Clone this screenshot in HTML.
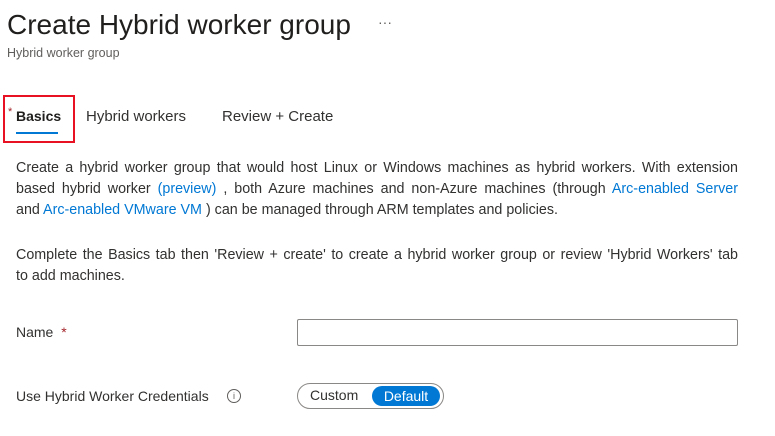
<!DOCTYPE html>
<html><head><style>
body{margin:0;width:775px;height:436px;background:#fff;font-family:"Liberation Sans",sans-serif;color:#323130;position:relative;overflow:hidden}
.a{position:absolute;white-space:nowrap}
a{color:#0078d4;text-decoration:none}
.l{position:absolute;left:16px;width:722px;font-size:14.3px;line-height:21px;text-align:justify;text-align-last:justify;white-space:nowrap;color:#323130}
.e{text-align-last:left}
</style></head><body>
<div class="a" style="left:7px;top:9px;font-size:28px;color:#201f1e">Create Hybrid worker group</div>
<div class="a" style="left:378px;top:14px;font-size:14px;color:#605e5c">···</div>
<div class="a" style="left:7px;top:46px;font-size:12.5px;color:#605e5c">Hybrid worker group</div>
<div class="a" style="left:3px;top:95px;width:68px;height:44px;border:2px solid #e81123"></div>
<div class="a" style="left:8px;top:106px;font-size:11px;color:#a4262c">*</div>
<div class="a" style="left:16px;top:108px;font-size:14px;font-weight:bold;color:#201f1e">Basics</div>
<div class="a" style="left:16px;top:132px;width:42px;height:2px;background:#0078d4"></div>
<div class="a" style="left:86px;top:108px;font-size:15px">Hybrid workers</div>
<div class="a" style="left:222px;top:108px;font-size:15px">Review + Create</div>
<div class="l" style="top:158px">Create a hybrid worker group that would host Linux or Windows machines as hybrid workers. With extension</div>
<div class="l" style="top:179px">based hybrid worker <a>(preview)</a> , both Azure machines and non-Azure machines (through <a>Arc-enabled Server</a></div>
<div class="l e" style="top:200px">and <a>Arc-enabled VMware VM</a> ) can be managed through ARM templates and policies.</div>
<div class="l" style="top:245px">Complete the Basics tab then 'Review + create' to create a hybrid worker group or review 'Hybrid Workers' tab</div>
<div class="l e" style="top:266px">to add machines.</div>
<div class="a" style="left:16px;top:324px;font-size:14px">Name <span style="color:#a4262c;margin-left:4px">*</span></div>
<div class="a" style="left:297px;top:319px;width:439px;height:25px;border:1px solid #8a8886;border-radius:2px"></div>
<div class="a" style="left:16px;top:388px;font-size:14px">Use Hybrid Worker Credentials</div>
<div class="a" style="left:227px;top:389px;width:12px;height:12px;border:1px solid #605e5c;border-radius:50%;font-size:9px;text-align:center;line-height:12px;color:#605e5c">i</div>
<div class="a" style="left:297px;top:383px;width:145px;height:24px;border:1px solid #8a8886;border-radius:13px"></div>
<div class="a" style="left:310px;top:387px;font-size:14px">Custom</div>
<div class="a" style="left:372px;top:386px;width:68px;height:20px;background:#0078d4;border-radius:10px;color:#fff;font-size:14px;text-align:center;line-height:20px">Default</div>
</body></html>
